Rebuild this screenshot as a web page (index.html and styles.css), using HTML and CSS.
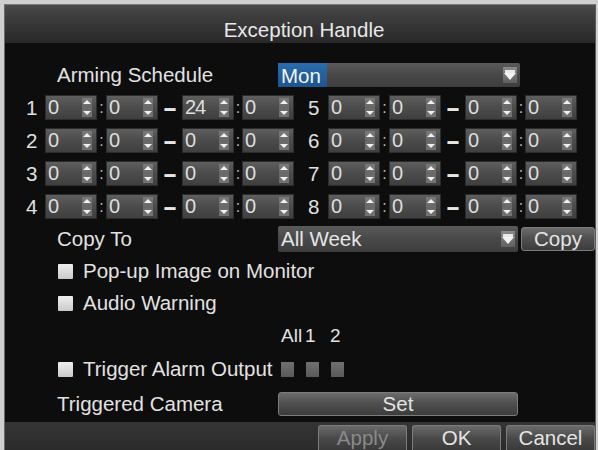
FILE: index.html
```html
<!DOCTYPE html>
<html>
<head>
<meta charset="utf-8">
<link rel="stylesheet" href="styles.css">
</head>
<body>
<div class="window">
  <div class="titlebar">Exception Handle</div>
  <div class="content">
    <div class="row">
      <span class="label">Arming Schedule</span>
      <div class="select"><span class="sel-text hl">Mon</span><span class="arrow"></span></div>
    </div>

    <div class="sched">
      <span class="idx">1</span>
      <div class="group">
        <div class="spin"><span class="val">0</span><span class="spinbtn"><i class="up"></i><i class="down"></i></span></div>
        <span class="colon">:</span>
        <div class="spin"><span class="val">0</span><span class="spinbtn"><i class="up"></i><i class="down"></i></span></div>
        <span class="dash">--</span>
        <div class="spin"><span class="val">24</span><span class="spinbtn"><i class="up"></i><i class="down"></i></span></div>
        <span class="colon">:</span>
        <div class="spin"><span class="val">0</span><span class="spinbtn"><i class="up"></i><i class="down"></i></span></div>
      </div>
      <span class="idx idx2">5</span>
      <div class="group">
        <div class="spin"><span class="val">0</span><span class="spinbtn"><i class="up"></i><i class="down"></i></span></div>
        <span class="colon">:</span>
        <div class="spin"><span class="val">0</span><span class="spinbtn"><i class="up"></i><i class="down"></i></span></div>
        <span class="dash">--</span>
        <div class="spin"><span class="val">0</span><span class="spinbtn"><i class="up"></i><i class="down"></i></span></div>
        <span class="colon">:</span>
        <div class="spin"><span class="val">0</span><span class="spinbtn"><i class="up"></i><i class="down"></i></span></div>
      </div>
    </div>

    <div class="sched">
      <span class="idx">2</span>
      <div class="group">
        <div class="spin"><span class="val">0</span><span class="spinbtn"><i class="up"></i><i class="down"></i></span></div>
        <span class="colon">:</span>
        <div class="spin"><span class="val">0</span><span class="spinbtn"><i class="up"></i><i class="down"></i></span></div>
        <span class="dash">--</span>
        <div class="spin"><span class="val">0</span><span class="spinbtn"><i class="up"></i><i class="down"></i></span></div>
        <span class="colon">:</span>
        <div class="spin"><span class="val">0</span><span class="spinbtn"><i class="up"></i><i class="down"></i></span></div>
      </div>
      <span class="idx idx2">6</span>
      <div class="group">
        <div class="spin"><span class="val">0</span><span class="spinbtn"><i class="up"></i><i class="down"></i></span></div>
        <span class="colon">:</span>
        <div class="spin"><span class="val">0</span><span class="spinbtn"><i class="up"></i><i class="down"></i></span></div>
        <span class="dash">--</span>
        <div class="spin"><span class="val">0</span><span class="spinbtn"><i class="up"></i><i class="down"></i></span></div>
        <span class="colon">:</span>
        <div class="spin"><span class="val">0</span><span class="spinbtn"><i class="up"></i><i class="down"></i></span></div>
      </div>
    </div>

    <div class="sched">
      <span class="idx">3</span>
      <div class="group">
        <div class="spin"><span class="val">0</span><span class="spinbtn"><i class="up"></i><i class="down"></i></span></div>
        <span class="colon">:</span>
        <div class="spin"><span class="val">0</span><span class="spinbtn"><i class="up"></i><i class="down"></i></span></div>
        <span class="dash">--</span>
        <div class="spin"><span class="val">0</span><span class="spinbtn"><i class="up"></i><i class="down"></i></span></div>
        <span class="colon">:</span>
        <div class="spin"><span class="val">0</span><span class="spinbtn"><i class="up"></i><i class="down"></i></span></div>
      </div>
      <span class="idx idx2">7</span>
      <div class="group">
        <div class="spin"><span class="val">0</span><span class="spinbtn"><i class="up"></i><i class="down"></i></span></div>
        <span class="colon">:</span>
        <div class="spin"><span class="val">0</span><span class="spinbtn"><i class="up"></i><i class="down"></i></span></div>
        <span class="dash">--</span>
        <div class="spin"><span class="val">0</span><span class="spinbtn"><i class="up"></i><i class="down"></i></span></div>
        <span class="colon">:</span>
        <div class="spin"><span class="val">0</span><span class="spinbtn"><i class="up"></i><i class="down"></i></span></div>
      </div>
    </div>

    <div class="sched">
      <span class="idx">4</span>
      <div class="group">
        <div class="spin"><span class="val">0</span><span class="spinbtn"><i class="up"></i><i class="down"></i></span></div>
        <span class="colon">:</span>
        <div class="spin"><span class="val">0</span><span class="spinbtn"><i class="up"></i><i class="down"></i></span></div>
        <span class="dash">--</span>
        <div class="spin"><span class="val">0</span><span class="spinbtn"><i class="up"></i><i class="down"></i></span></div>
        <span class="colon">:</span>
        <div class="spin"><span class="val">0</span><span class="spinbtn"><i class="up"></i><i class="down"></i></span></div>
      </div>
      <span class="idx idx2">8</span>
      <div class="group">
        <div class="spin"><span class="val">0</span><span class="spinbtn"><i class="up"></i><i class="down"></i></span></div>
        <span class="colon">:</span>
        <div class="spin"><span class="val">0</span><span class="spinbtn"><i class="up"></i><i class="down"></i></span></div>
        <span class="dash">--</span>
        <div class="spin"><span class="val">0</span><span class="spinbtn"><i class="up"></i><i class="down"></i></span></div>
        <span class="colon">:</span>
        <div class="spin"><span class="val">0</span><span class="spinbtn"><i class="up"></i><i class="down"></i></span></div>
      </div>
    </div>

    <div class="row">
      <span class="label">Copy To</span>
      <div class="select select-copy"><span class="sel-text">All Week</span><span class="arrow"></span></div>
      <button class="btn btn-copy">Copy</button>
    </div>

    <div class="row row-check">
      <span class="check"></span><span class="label">Pop-up Image on Monitor</span>
    </div>
    <div class="row row-check">
      <span class="check"></span><span class="label">Audio Warning</span>
    </div>

    <div class="row row-out-head">
      <span class="spacer"></span>
      <div class="outs">
        <span class="out-label">All</span>
        <span class="out-label">1</span>
        <span class="out-label">2</span>
      </div>
    </div>
    <div class="row row-trigger">
      <div class="trigger-left"><span class="check"></span><span class="label">Trigger Alarm Output</span></div>
      <div class="outs">
        <span class="out-cell"><span class="out-box"></span></span>
        <span class="out-cell"><span class="out-box"></span></span>
        <span class="out-cell"><span class="out-box"></span></span>
      </div>
    </div>

    <div class="row row-camera">
      <span class="label">Triggered Camera</span>
      <button class="btn btn-set">Set</button>
    </div>
  </div>
  <div class="bottombar">
    <button class="btn btn-bottom disabled">Apply</button>
    <button class="btn btn-bottom">OK</button>
    <button class="btn btn-bottom">Cancel</button>
  </div>
</div>
</body>
</html>
```

FILE: styles.css
```css
html, body {
  margin: 0;
  padding: 0;
}
body {
  background: #cfcfcf;
  width: 598px;
  height: 450px;
  overflow: hidden;
  font-family: "Liberation Sans", Arial, sans-serif;
  color: #e2e2e2;
}
.window {
  margin: 4px 0 0 4px;
  height: 446px;
  border-left: 1px solid #6a6a6a;
  border-right: 1px solid #5a5a5a;
  border-top: 1px solid #7a7a7a;
  box-sizing: border-box;
  width: 592px;
  display: flex;
  flex-direction: column;
  background: #0d0d0d;
}
.titlebar {
  height: 38px;
  box-sizing: border-box;
  flex: none;
  background: linear-gradient(#4a4a4a 0%, #3d3d3d 30%, #333 65%, #282828 100%);
  text-align: center;
  font-size: 20.5px;
  line-height: 28px;
  padding-top: 11px;
  color: #e8e8e8;
  padding-left: 8px;
}
.content {
  flex: 1;
  display: flex;
  flex-direction: column;
  gap: 8px;
  padding-top: 20px;
  background: #0d0d0d;
}
.row {
  display: flex;
  align-items: center;
  height: 24px;
  padding-left: 52px;
  font-size: 20.5px;
}
.label {
  white-space: nowrap;
  line-height: 24px;
}
.row > .label:first-child {
  width: 221px;
  flex: none;
}
.select {
  width: 242px;
  height: 24px;
  box-sizing: border-box;
  background: linear-gradient(#5a5a5a, #484848 50%, #3e3e3e);
  border-radius: 2px;
  display: flex;
  align-items: center;
  justify-content: space-between;
  padding-right: 3px;
}
.select-copy {
  width: 240px;
  height: 26px;
}
.sel-text {
  height: 100%;
  line-height: 25px;
  padding: 0 6px 0 3px;
  color: #e6e6e6;
}
.hl {
  background: linear-gradient(#2a6cae, #1b5590);
  color: #f4f4f4;
}
.arrow {
  width: 14px;
  height: 16px;
  background: linear-gradient(#8a8a8a, #5f5f5f);
  position: relative;
}
.arrow::before {
  content: "";
  position: absolute;
  left: 2px;
  top: 3px;
  width: 10px;
  height: 3px;
  background: #e8e8e8;
}
.arrow::after {
  content: "";
  position: absolute;
  left: 1px;
  top: 6px;
  border-left: 6px solid transparent;
  border-right: 6px solid transparent;
  border-top: 7px solid #f2f2f2;
}
.sched {
  display: flex;
  align-items: center;
  height: 25px;
  padding-left: 21px;
  font-size: 20.5px;
}
.idx {
  width: 19px;
  flex: none;
  line-height: 25px;
  color: #e0e0e0;
}
.idx2 {
  width: 20px;
  padding-left: 14px;
}
.group {
  display: flex;
  align-items: center;
  width: 249px;
  flex: none;
}
.spin {
  width: 52px;
  height: 25px;
  box-sizing: border-box;
  background: linear-gradient(#5e5e5e, #4d4d4d 45%, #3f3f3f);
  border: 1px solid #2c2c2c;
  display: flex;
  align-items: center;
  justify-content: space-between;
  padding: 0 4px 0 2px;
  flex: none;
}
.val {
  font-size: 20px;
  line-height: 23px;
  color: #dedede;
  letter-spacing: -1px;
}
.spinbtn {
  width: 10px;
  height: 19px;
  background: linear-gradient(#7a7a7a, #686868 50%, #747474);
  display: flex;
  flex-direction: column;
  justify-content: space-between;
  align-items: center;
  padding: 2px 0;
  box-sizing: border-box;
}
.up {
  width: 0;
  height: 0;
  border-left: 4px solid transparent;
  border-right: 4px solid transparent;
  border-bottom: 4px solid #f0f0f0;
}
.down {
  width: 0;
  height: 0;
  border-left: 4px solid transparent;
  border-right: 4px solid transparent;
  border-top: 4px solid #f0f0f0;
}
.colon {
  width: 9px;
  text-align: center;
  font-size: 16px;
  color: #bdbdbd;
  flex: none;
}
.group .colon:last-of-type {
  width: 8px;
}
.dash {
  width: 24px;
  text-align: center;
  font-size: 24px;
  font-weight: bold;
  letter-spacing: -3px;
  text-indent: -3px;
  color: #e6e6e6;
  flex: none;
}
.btn {
  font-family: "Liberation Sans", Arial, sans-serif;
  font-size: 20.5px;
  color: #e4e4e4;
  background: linear-gradient(#6c6c6c, #505050 45%, #3c3c3c);
  border: 1px solid #7c7c7c;
  border-radius: 3px;
  padding: 0;
  margin: 0;
  box-sizing: border-box;
}
.btn-copy {
  width: 74px;
  height: 24px;
  margin-left: 3px;
  line-height: 22px;
}
.row-check {
  padding-left: 53px;
}
.check {
  width: 15px;
  height: 15px;
  flex: none;
  background: linear-gradient(#f0f0f0, #c9c9c9);
  margin-right: 10px;
  border-radius: 1px;
}
.row-out-head {
  height: 26px;
}
.spacer {
  width: 221px;
  flex: none;
}
.outs {
  display: flex;
  padding-left: 3px;
}
.out-label {
  width: 25px;
  font-size: 19px;
  line-height: 26px;
}
.out-label:first-child {
  width: 24px;
}
.row-trigger {
  padding-left: 53px;
}
.trigger-left {
  width: 220px;
  flex: none;
  display: flex;
  align-items: center;
}
.out-cell {
  width: 25px;
  display: flex;
}
.out-box {
  width: 13px;
  height: 15px;
  background: linear-gradient(#707070, #5a5a5a);
}
.row-camera {
  margin-top: 3px;
}
.btn-set {
  width: 240px;
  height: 24px;
  line-height: 22px;
}
.bottombar {
  height: 28px;
  flex: none;
  background: linear-gradient(#353535, #2b2b2b);
  display: flex;
  justify-content: flex-end;
  align-items: flex-end;
  gap: 5px;
  padding-right: 0;
}
.btn-bottom {
  width: 89px;
  height: 25px;
  line-height: 24px;
  border-radius: 3px 3px 0 0;
  border-bottom: none;
  background: linear-gradient(#6a6a6a, #4a4a4a 50%, #3a3a3a);
}
.disabled {
  color: #8a8a8a;
}
```
